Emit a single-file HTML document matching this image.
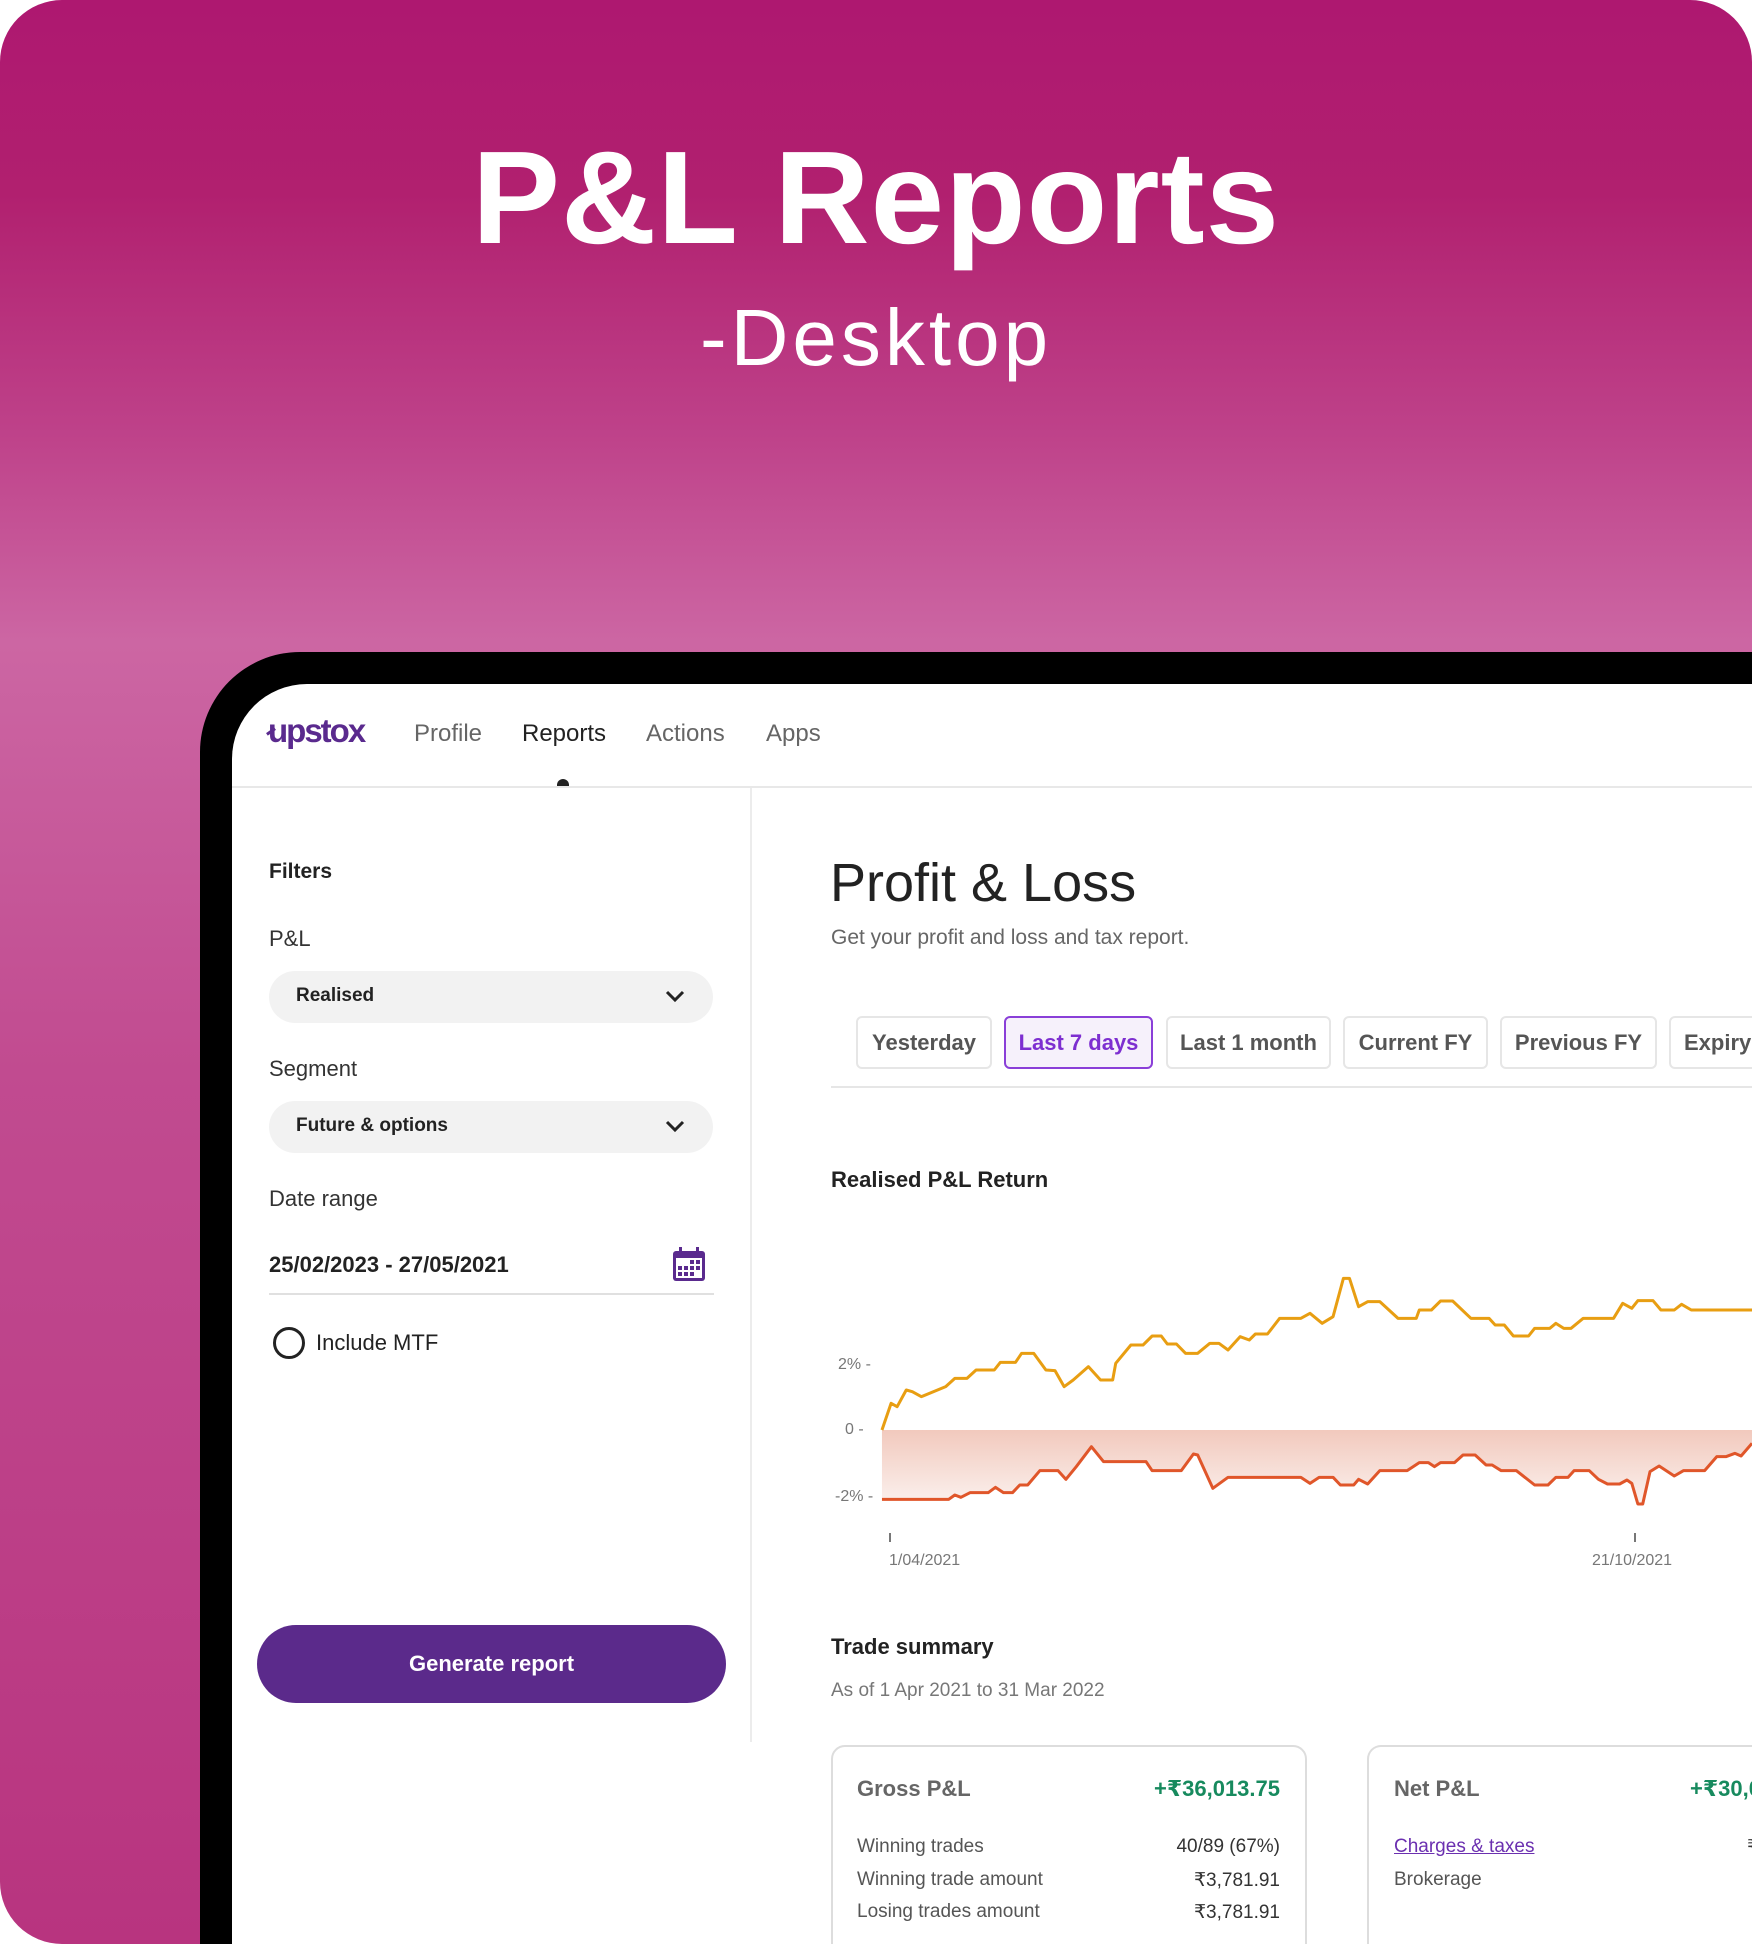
<!DOCTYPE html>
<html><head><meta charset="utf-8"><style>
*{margin:0;padding:0;box-sizing:border-box}
html,body{width:1752px;height:1944px;overflow:hidden;background:#fff;font-family:"Liberation Sans","DejaVu Sans",sans-serif}
#wrap{position:relative;width:1752px;height:1944px;overflow:hidden}
#bg{position:absolute;left:0;top:0;width:1752px;height:1944px;border-radius:62px;
background:linear-gradient(180deg,#AE1870 0%,#B1206F 10%,#BE4189 22%,#CC66A3 33%,#C14B90 55%,#B8347F 100%)}
.a{position:absolute;white-space:nowrap}
#t1{left:0;width:1752px;text-align:center;top:122px;font-size:132px;font-weight:bold;color:#fff;letter-spacing:1px}
#t2{left:0;width:1752px;text-align:center;top:292px;font-size:80px;color:#fff;letter-spacing:4px;font-weight:300}
#frame{position:absolute;left:200px;top:652px;width:1600px;height:1300px;background:#000;border-radius:100px 0 0 0}
#screen{position:absolute;left:232px;top:684px;width:1560px;height:1270px;background:#fff;border-radius:75px 0 0 0}
.nav{font-size:24px;color:#666;top:720px}
.lbl{font-size:22px;color:#333}
.sel{position:absolute;left:269px;width:444px;height:52px;background:#f2f2f2;border-radius:26px}
.sel span{position:absolute;left:27px;top:14px;font-size:19px;font-weight:bold;color:#222}
.sel svg{position:absolute;right:28px;top:18px}
.tab{position:absolute;top:1016px;height:53px;border:2px solid #e6e6e6;border-radius:6px;font-size:22px;color:#555;font-weight:bold;text-align:center;line-height:49px}
.row{font-size:19px;color:#555}
.val{font-size:19px;color:#333;text-align:right}
</style></head><body><div id="wrap">
<div id="bg"></div>
<div class="a" id="t1">P&amp;L Reports</div>
<div class="a" id="t2">-Desktop</div>
<div id="frame"></div>
<div id="screen"></div>
<!-- nav -->
<div class="a" style="left:268px;top:712px;font-size:33px;font-weight:bold;color:#5A2A8E;letter-spacing:-2px">upstox</div>
<div class="a" style="left:266px;top:730px;width:10px;height:3px;background:#5A2A8E;transform:rotate(-35deg)"></div>
<div class="a nav" style="left:414px">Profile</div>
<div class="a nav" style="left:522px;color:#222">Reports</div>
<div class="a nav" style="left:646px">Actions</div>
<div class="a nav" style="left:766px">Apps</div>
<div class="a" style="left:232px;top:786px;width:1520px;height:2px;background:#e8e8e8"></div>
<div class="a" style="left:557px;top:779px;width:12px;border-radius:6px 6px 0 0;background:#222;height:7px"></div>
<div class="a" style="left:750px;top:788px;width:2px;height:954px;background:#ececec"></div>
<!-- sidebar -->
<div class="a" style="left:269px;top:860px;font-size:21px;font-weight:bold;color:#222">Filters</div>
<div class="a lbl" style="left:269px;top:926px">P&amp;L</div>
<div class="sel" style="top:971px"><span>Realised</span><svg width="20" height="14" viewBox="0 0 20 14"><path d="M2 3 L10 11 L18 3" fill="none" stroke="#222" stroke-width="3"/></svg></div>
<div class="a lbl" style="left:269px;top:1056px">Segment</div>
<div class="sel" style="top:1101px"><span>Future &amp; options</span><svg width="20" height="14" viewBox="0 0 20 14"><path d="M2 3 L10 11 L18 3" fill="none" stroke="#222" stroke-width="3"/></svg></div>
<div class="a lbl" style="left:269px;top:1186px">Date range</div>
<div class="a" style="left:269px;top:1252px;font-size:22px;font-weight:bold;color:#222">25/02/2023 - 27/05/2021</div>
<svg class="a" style="left:672px;top:1246px" width="34" height="36" viewBox="0 0 34 36"><rect x="1" y="5" width="32" height="30" rx="3" fill="#5A2A8E"/><rect x="7" y="1" width="3" height="7" fill="#5A2A8E"/><rect x="24" y="1" width="3" height="7" fill="#5A2A8E"/><rect x="4" y="12" width="26" height="20" fill="#fff"/><g fill="#5A2A8E"><rect x="18" y="14" width="4" height="4"/><rect x="24" y="14" width="4" height="4"/><rect x="6" y="20" width="4" height="4"/><rect x="12" y="20" width="4" height="4"/><rect x="18" y="20" width="4" height="4"/><rect x="24" y="20" width="4" height="4"/><rect x="6" y="26" width="4" height="4"/><rect x="12" y="26" width="4" height="4"/><rect x="18" y="26" width="4" height="4"/></g></svg>
<div class="a" style="left:269px;top:1293px;width:445px;height:2px;background:#e0e0e0"></div>
<div class="a" style="left:273px;top:1327px;width:32px;height:32px;border:3px solid #222;border-radius:50%"></div>
<div class="a" style="left:316px;top:1330px;font-size:22px;color:#222">Include MTF</div>
<div class="a" style="left:257px;top:1625px;width:469px;height:78px;border-radius:39px;background:#5B2A8B;color:#fff;font-size:22px;font-weight:bold;text-align:center;line-height:78px">Generate report</div>
<!-- main -->
<div class="a" style="left:830px;top:852px;font-size:54px;color:#222">Profit &amp; Loss</div>
<div class="a" style="left:831px;top:926px;font-size:21px;color:#666">Get your profit and loss and tax report.</div>
<div class="tab" style="left:856px;width:136px">Yesterday</div>
<div class="tab" style="left:1004px;width:149px;border-color:#8A3FD8;background:#F6F1FB;color:#7D2FD0">Last 7 days</div>
<div class="tab" style="left:1166px;width:165px">Last 1 month</div>
<div class="tab" style="left:1343px;width:145px">Current FY</div>
<div class="tab" style="left:1500px;width:157px">Previous FY</div>
<div class="tab" style="left:1669px;width:120px;text-align:left;padding-left:13px">Expiry</div>
<div class="a" style="left:831px;top:1086px;width:921px;height:2px;background:#e6e6e6"></div>
<div class="a" style="left:831px;top:1167px;font-size:22px;font-weight:bold;color:#222">Realised P&amp;L Return</div>
<div class="a" style="left:838px;top:1356px;font-size:16px;color:#777">2% -</div>
<div class="a" style="left:845px;top:1421px;font-size:16px;color:#777">0 -</div>
<div class="a" style="left:835px;top:1488px;font-size:16px;color:#777">-2% -</div>
<div class="a" style="left:889px;top:1533px;width:2px;height:9px;background:#777"></div>
<div class="a" style="left:1634px;top:1533px;width:2px;height:9px;background:#777"></div>
<div class="a" style="left:889px;top:1552px;font-size:16px;color:#777">1/04/2021</div>
<div class="a" style="left:1592px;top:1552px;font-size:16px;color:#777">21/10/2021</div>
<svg class="a" style="left:800px;top:1200px" width="952" height="400" viewBox="0 0 1568 1200" preserveAspectRatio="none">
<defs><linearGradient id="g" x1="0" y1="0" x2="0" y2="1"><stop offset="0" stop-color="#F2C9BD"/><stop offset="1" stop-color="#FBF1EE"/></linearGradient></defs>
<path d="M135 690 L1568 690 L1568 730 L1550 768 L1540 760 L1525 770 L1510 770 L1490 812 L1455 812 L1440 828 L1415 798 L1400 815 L1388 912 L1380 912 L1370 850 L1362 840 L1350 852 L1330 852 L1315 838 L1300 812 L1275 812 L1265 832 L1245 832 L1232 855 L1210 855 L1180 812 L1155 812 L1140 795 L1130 795 L1112 765 L1092 765 L1078 788 L1055 788 L1045 800 L1035 788 L1020 788 L1000 812 L955 812 L935 852 L920 838 L912 855 L890 855 L878 832 L855 832 L840 850 L825 832 L705 832 L680 865 L655 765 L648 762 L628 812 L580 812 L570 785 L500 785 L480 740 L455 800 L438 838 L425 812 L395 812 L375 855 L362 855 L350 878 L335 878 L322 862 L310 878 L280 878 L265 892 L255 885 L245 898 L135 898 Z" fill="url(#g)"/>
<polyline fill="none" stroke="#E89E12" stroke-width="3" vector-effect="non-scaling-stroke" stroke-linejoin="round" points="135,690 150,610 160,620 175,570 185,575 200,590 240,560 255,535 275,535 290,510 320,510 330,487 355,487 365,460 385,460 405,510 420,512 435,560 450,540 475,500 495,540 515,540 520,490 545,435 565,435 580,408 595,408 605,432 620,432 635,460 655,460 675,430 690,430 705,450 725,410 740,420 750,402 770,402 790,355 825,355 840,340 860,370 878,350 895,235 905,235 920,320 935,305 955,305 985,355 1015,355 1020,330 1040,330 1055,303 1075,303 1105,355 1135,355 1145,375 1160,375 1175,408 1200,408 1210,385 1235,385 1245,370 1258,385 1270,385 1290,355 1340,355 1355,310 1370,325 1380,302 1405,302 1418,330 1440,330 1452,313 1468,330 1568,330"/>
<polyline fill="none" stroke="#E0562A" stroke-width="3" vector-effect="non-scaling-stroke" stroke-linejoin="round" points="135,898 245,898 255,885 265,892 280,878 310,878 322,862 335,878 350,878 362,855 375,855 395,812 425,812 438,838 455,800 480,740 500,785 570,785 580,812 628,812 648,762 655,765 680,865 705,832 825,832 840,850 855,832 878,832 890,855 912,855 920,838 935,852 955,812 1000,812 1020,788 1035,788 1045,800 1055,788 1078,788 1092,765 1112,765 1130,795 1140,795 1155,812 1180,812 1210,855 1232,855 1245,832 1265,832 1275,812 1300,812 1315,838 1330,852 1350,852 1362,840 1370,850 1380,912 1388,912 1400,815 1415,798 1440,828 1455,812 1490,812 1510,770 1525,770 1540,760 1550,768 1568,730"/>
</svg>
<div class="a" style="left:831px;top:1634px;font-size:22px;font-weight:bold;color:#222">Trade summary</div>
<div class="a" style="left:831px;top:1680px;font-size:19px;color:#777">As of 1 Apr 2021 to 31 Mar 2022</div>
<div class="a" style="left:831px;top:1745px;width:476px;height:220px;border:2px solid #ddd;border-radius:14px"></div>
<div class="a" style="left:1367px;top:1745px;width:385px;height:220px;border:2px solid #ddd;border-right:none;border-radius:14px 0 0 14px"></div>
<div class="a" style="left:857px;top:1776px;font-size:22px;font-weight:bold;color:#666">Gross P&amp;L</div>
<div class="a" style="left:1080px;width:200px;text-align:right;top:1776px;font-size:22px;font-weight:bold;color:#178A5E">+₹36,013.75</div>
<div class="a row" style="left:857px;top:1836px">Winning trades</div>
<div class="a row" style="left:857px;top:1869px">Winning trade amount</div>
<div class="a row" style="left:857px;top:1901px">Losing trades amount</div>
<div class="a val" style="left:1080px;width:200px;top:1836px">40/89 (67%)</div>
<div class="a val" style="left:1080px;width:200px;top:1869px">₹3,781.91</div>
<div class="a val" style="left:1080px;width:200px;top:1901px">₹3,781.91</div>
<div class="a" style="left:1394px;top:1776px;font-size:22px;font-weight:bold;color:#666">Net P&amp;L</div>
<div class="a" style="left:1690px;top:1776px;font-size:22px;font-weight:bold;color:#178A5E;width:62px;overflow:hidden">+₹30,013</div>
<div class="a row" style="left:1394px;top:1836px;color:#6B30B0;text-decoration:underline">Charges &amp; taxes</div>
<div class="a row" style="left:1394px;top:1869px">Brokerage</div>
<div class="a val" style="left:1747px;top:1836px;width:5px;overflow:hidden">₹</div>
</div></body></html>
